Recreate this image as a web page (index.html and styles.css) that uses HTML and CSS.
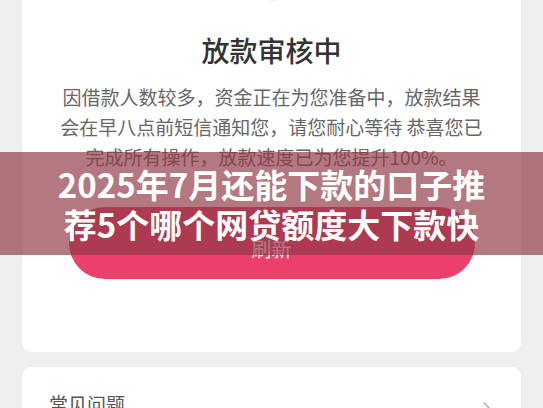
FILE: index.html
```html
<!DOCTYPE html>
<html lang="zh-CN">
<head>
    <meta charset="UTF-8">
    <meta name="viewport" content="width=device-width, initial-scale=1.0">
    <title>放款审核中</title>
    <link rel="stylesheet" href="styles.css">
</head>
<body>
    <div class="page">
        <div class="card status-card">
            <svg class="status-icon" viewBox="0 0 60 44">
                <ellipse cx="30" cy="20" rx="22" ry="23" fill="#f5f3da"></ellipse>
            </svg>
            <h1 class="title">放款审核中</h1>
            <p class="desc">因借款人数较多，资金正在为您准备中，放款结果会在早八点前短信通知您，请您耐心等待 恭喜您已完成所有操作，放款速度已为您提升100%。</p>
            <button class="refresh">刷新</button>
        </div>

        <div class="card faq-card">
            <span class="faq-label">常见问题</span>
            <svg class="chevron" viewBox="0 0 12 20" fill="none" stroke="#bdbdbd" stroke-width="2.2">
                <polyline points="2,2 10,10 2,18"></polyline>
            </svg>
        </div>
    </div>

    <div class="banner">
        <p>2025年7月还能下款的口子推荐5个哪个网贷额度大下款快</p>
    </div>
</body>
</html>
```

FILE: styles.css
```css
* {
    margin: 0;
    padding: 0;
    box-sizing: border-box;
}

body {
    font-family: "Noto Sans CJK SC", "Noto Sans", sans-serif;
    background: #efefef;
    width: 543px;
    height: 408px;
    overflow: hidden;
    position: relative;
}

.page {
    margin-top: -42px;
    padding: 0 22px;
    display: flex;
    flex-direction: column;
    gap: 15px;
}

.card {
    background: #fff;
    border-radius: 9px;
}

.status-card {
    display: flex;
    flex-direction: column;
    align-items: center;
    padding: 0 0 73px;
}

.status-icon {
    width: 60px;
    height: 44px;
    display: block;
}

.title {
    margin-top: 28px;
    font-size: 28px;
    line-height: 40px;
    font-weight: 500;
    color: #333;
}

.desc {
    margin-top: 12px;
    width: 428px;
    font-size: 19px;
    line-height: 30px;
    color: #666;
    text-align: center;
}

.refresh {
    margin-top: 35px;
    width: 406px;
    height: 72px;
    border: none;
    border-radius: 36px;
    background: #ea406a;
    color: #fff;
    font-family: inherit;
    font-size: 20px;
    padding-top: 10px;
}

.faq-card {
    display: flex;
    align-items: center;
    justify-content: space-between;
    padding: 22px 28px 22px 27px;
}

.faq-label {
    font-size: 19px;
    line-height: 30px;
    color: #555;
}

.chevron {
    width: 11px;
    height: 18px;
    margin-top: 12px;
}

.banner {
    position: absolute;
    left: 0;
    top: 152px;
    width: 100%;
    height: 103px;
    background: rgba(144, 56, 68, 0.68);
    display: flex;
    align-items: center;
    justify-content: center;
}

.banner p {
    width: 440px;
    font-size: 33px;
    line-height: 40px;
    font-weight: 700;
    color: #fff;
    text-align: center;
}
```
